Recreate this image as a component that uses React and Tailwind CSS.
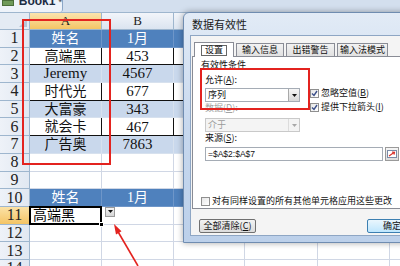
import React from 'react'

const COLS = ['w-[72px]', 'w-[72px]', 'w-[71px]', 'w-[73px]', 'w-[72px]', 'w-[60px]']
const LETTERS = ['A', 'B']

const TABLE = {
    1: { kind: 'head', a: '姓名', b: '1月' },
    2: { kind: 'plain', a: '高端黑', b: '453' },
    3: { kind: 'band', a: 'Jeremy', b: '4567' },
    4: { kind: 'plain', a: '时代光', b: '677' },
    5: { kind: 'band', a: '大富豪', b: '343' },
    6: { kind: 'plain', a: '就会卡', b: '467' },
    7: { kind: 'band', a: '广告奥', b: '7863' },
    10: { kind: 'head', a: '姓名', b: '1月' },
}

const TABS = [
    { label: '输入信息', w: 'w-[48px]' },
    { label: '出错警告', w: 'w-[49px]' },
    { label: '输入法模式', w: 'w-[51px]' },
]

const DropArrow = ({ disabled }) => (
    <svg width="5" height="3" viewBox="0 0 5 3">
        <polygon points="0,0 5,0 2.5,3" fill={disabled ? '#a8a8a8' : '#111'} />
    </svg>
)

const Select = ({ value, disabled, className }) => (
    <div className={`h-[14px] w-[95px] flex items-center border ${disabled ? 'border-[#c9c9c9] bg-[#f4f4f4] text-[#9a9a9a]' : 'border-[#a5acb5] bg-white text-[#111]'} ${className}`}>
        <span className="flex-1 pl-[2px] leading-[12px]">{value}</span>
        <div className={`h-[12px] w-[11px] flex items-center justify-center border-l ${disabled ? 'border-[#dcdcdc] bg-[#f4f4f4]' : 'border-[#a9a9a9] bg-gradient-to-b from-[#f6f6f6] to-[#d8d8d8]'}`}>
            <DropArrow disabled={disabled} />
        </div>
    </div>
)

const CheckBox = ({ checked }) => (
    <div className="w-[9px] h-[9px] shrink-0 border border-[#8f8f8f] bg-gradient-to-br from-[#e6e6e6] to-white flex items-center justify-center">
        {checked && (
            <svg width="7" height="7" viewBox="0 0 7 7">
                <path d="M1 3.5 L3 5.5 L6 1" stroke="#3b4f8a" strokeWidth="1.4" fill="none" />
            </svg>
        )}
    </div>
)

const SheetRow = ({ n }) => {
    const t = TABLE[n]
    const selected = n === 11
    let tone = 'bg-white'
    if (t?.kind === 'head') tone = 'bg-[#4f81bd] text-white border-[#6e96c9]'
    if (t?.kind === 'band') tone = 'bg-[#c9d8ec] border-[#d7e1ee]'
    const isLatin = (s) => /^[A-Za-z0-9]+$/.test(s || '')

    return (
        <div className="flex h-[17.7px] shrink-0">
            <div className={`w-[30px] shrink-0 flex items-center justify-center border-r border-b border-[#9eb6ce] text-[16px] leading-none text-[#222] ${selected ? 'bg-gradient-to-b from-[#fbe2a6] to-[#f4c464]' : 'bg-gradient-to-r from-[#eef2f8] to-[#e1e8f2]'}`}>
                {n}
            </div>
            {COLS.map((w, i) => {
                const inTable = t && i < 3
                const txt = t ? (i === 0 ? t.a : i === 1 ? t.b : '') : ''
                if (selected && i === 0) {
                    return (
                        <div key={i} className={`${w} shrink-0 relative flex items-center pl-[3px] border-r border-b border-[#d0d7e5] bg-white text-[14px] text-black`}>
                            高端黑
                            <div className="absolute -left-[1px] -top-[1px] -right-[1px] -bottom-[1px] border-2 border-black" />
                            <div className="absolute -right-[3px] -bottom-[3px] w-[5px] h-[5px] bg-black border border-white" />
                            <div className="absolute left-[75px] top-[0px] w-[10px] h-[10px] border border-[#9a9a9a] bg-gradient-to-b from-[#f4f4f4] to-[#d4d4d4] flex items-center justify-center">
                                <DropArrow />
                            </div>
                        </div>
                    )
                }
                return (
                    <div
                        key={i}
                        className={`${w} shrink-0 flex items-center justify-center border-r border-b ${inTable ? tone : 'bg-white border-[#d0d7e5]'} ${t?.kind === 'head' ? '' : 'text-[#111]'} ${isLatin(txt) ? 'text-[15px]' : 'text-[14px]'}`}
                    >
                        {txt}
                    </div>
                )
            })}
        </div>
    )
}

const Dialog = () => (
    <div className="absolute left-[183px] top-[12px] w-[240px] h-[231px] rounded-t-[6px] border border-[#6f8cb0] bg-gradient-to-b from-[#e2ebf6] via-[#c7d8ee] to-[#bcd0ea] shadow-[0_0_6px_rgba(0,0,0,0.35)] flex flex-col font-['Noto_Sans_CJK_SC',sans-serif]">
        <div className="h-[22px] flex items-center pl-[8px] text-[11px] text-[#1a1a1a]">数据有效性</div>
        <div className="h-[201px] ml-[6px] border border-[#8ea6c4] bg-[#f4f4f4] text-[9px] text-[#111]">
            {/* tabs */}
            <div className="flex items-end pl-[3px] pt-[6px] h-[20px]">
                <div className="h-[15px] w-[40px] -mb-[1px] relative z-10 flex items-center justify-center border border-b-0 border-[#898c95] bg-white">
                    <span className="h-[11px] flex items-center border border-[#666] px-[3px]">设置</span>
                </div>
                {TABS.map((tab) => (
                    <div key={tab.label} className={`${tab.w} h-[13px] ml-[2px] flex items-center justify-center whitespace-nowrap border border-b-0 border-[#898c95] bg-gradient-to-b from-[#f2f2f2] to-[#e1e1e1]`}>
                        {tab.label}
                    </div>
                ))}
            </div>
            {/* panel */}
            <div className="h-[153px] ml-[1px] border border-[#898c95] bg-white pl-[8px] pt-[2px]">
                <div className="h-[12px] leading-[12px]">有效性条件</div>
                <div className="flex pl-[4px]">
                    <div className="w-[95px]">
                        <div className="mt-[3px] h-[12px] leading-[12px]">允许(<u>A</u>):</div>
                        <Select className="mt-[2px]" value="序列" />
                        <div className="h-[12px] leading-[12px] text-[#a3a3a3]">数据(<u>D</u>):</div>
                        <Select disabled className="mt-[4px]" value="介于" />
                    </div>
                    <div className="ml-[10px] mt-[16px] flex flex-col gap-[2px]">
                        <div className="h-[12px] flex items-center gap-[2px]">
                            <CheckBox checked />
                            <span>忽略空值(<u>B</u>)</span>
                        </div>
                        <div className="h-[12px] flex items-center gap-[2px]">
                            <CheckBox checked />
                            <span>提供下拉箭头(<u>I</u>)</span>
                        </div>
                    </div>
                </div>
                <div className="h-[12px] leading-[12px] pl-[4px]">来源(<u>S</u>):</div>
                <div className="flex mt-[3px] pl-[4px]">
                    <div className="h-[14px] w-[178px] border border-[#a5acb5] bg-white flex items-center pl-[2px] font-['Liberation_Sans',sans-serif] text-[8.5px]">
                        =$A$2:$A$7
                    </div>
                    <div className="h-[14px] w-[14px] ml-[2px] border border-[#9a9a9a] bg-gradient-to-b from-[#f6f6f6] to-[#dcdcdc] flex items-center justify-center">
                        <svg width="10" height="8" viewBox="0 0 10 8">
                            <rect x="0.5" y="0.5" width="9" height="7" fill="#fff" stroke="#7a8aa6" />
                            <path d="M2 6 L7 2.5 M5 2 L7.5 2.3 L7 4.6" stroke="#d8322c" strokeWidth="1.2" fill="none" />
                        </svg>
                    </div>
                </div>
                <div className="mt-[34px] h-[12px] flex items-center gap-[2px]">
                    <CheckBox />
                    <span>对有同样设置的所有其他单元格应用这些更改</span>
                </div>
            </div>
            {/* buttons */}
            <div className="flex mt-[10px] pl-[8px]">
                <div className="h-[14px] w-[57px] rounded-[2px] border border-[#707070] bg-gradient-to-b from-[#f3f3f3] to-[#dcdcdc] flex items-center justify-center">
                    全部清除(<u>C</u>)
                </div>
                <div className="h-[14px] w-[50px] ml-[111px] rounded-[2px] border border-[#3c7fb1] bg-gradient-to-b from-[#eaf6fd] to-[#bee6fd] flex items-center justify-center">
                    确定
                </div>
            </div>
        </div>
    </div>
)

export default function App() {
    return (
        <div className="relative w-[400px] h-[266px] overflow-hidden bg-white font-['Liberation_Serif','Noto_Sans_CJK_SC',serif]">
            {/* workbook tab strip */}
            <div className="h-[13px] flex bg-[#d3dfee] border-b border-[#9eb6ce]">
                <div className="w-[63px] h-full flex items-start overflow-hidden bg-[#eef3fa] border-r border-[#8ba6c6] rounded-br-[3px]">
                    <div className="w-[12px] h-[6px] ml-[2px] bg-[#6f9a5a] border border-[#4b6e3b]" />
                    <span className="ml-[5px] -mt-[5px] text-[12px] leading-[12px] font-bold text-[#1d2d44] font-['Liberation_Sans',sans-serif]">Book1</span>
                    <span className="ml-[3px] -mt-[4px] text-[9px] text-[#444] font-['Liberation_Sans',sans-serif]">*</span>
                </div>
            </div>

            {/* column headers */}
            <div className="flex h-[17px]">
                <div className="w-[30px] shrink-0 relative border-r border-b border-[#9eb6ce] bg-[#e4ebf4]">
                    <svg className="absolute right-[2px] bottom-[2px]" width="8" height="8" viewBox="0 0 8 8">
                        <polygon points="8,0 8,8 0,8" fill="#b7c6d8" />
                    </svg>
                </div>
                {COLS.map((w, i) => (
                    <div
                        key={i}
                        className={`${w} shrink-0 flex items-center justify-center border-r border-b border-[#9eb6ce] text-[13px] text-[#222] ${i === 0 ? 'bg-gradient-to-b from-[#fbe4ad] to-[#f5c464]' : 'bg-gradient-to-b from-[#f2f5fa] to-[#dbe4f0]'}`}
                    >
                        {LETTERS[i]}
                    </div>
                ))}
            </div>

            {/* rows */}
            {Array.from({ length: 14 }, (_, k) => (
                <SheetRow key={k} n={k + 1} />
            ))}

            <Dialog />

            {/* annotations */}
            <div className="absolute left-[22px] top-[19px] w-[89px] h-[146px] border-2 border-[#e3231f]" />
            <div className="absolute left-[200px] top-[68px] w-[110px] h-[42px] border-2 border-[#e3231f]" />
            <svg className="absolute left-0 top-0" width="400" height="266" viewBox="0 0 400 266">
                <line x1="138" y1="266" x2="117" y2="230" stroke="#e3231f" strokeWidth="1.6" />
                <polygon points="114,224 116,234.5 121.5,231.3" fill="#e3231f" />
            </svg>
        </div>
    )
}
